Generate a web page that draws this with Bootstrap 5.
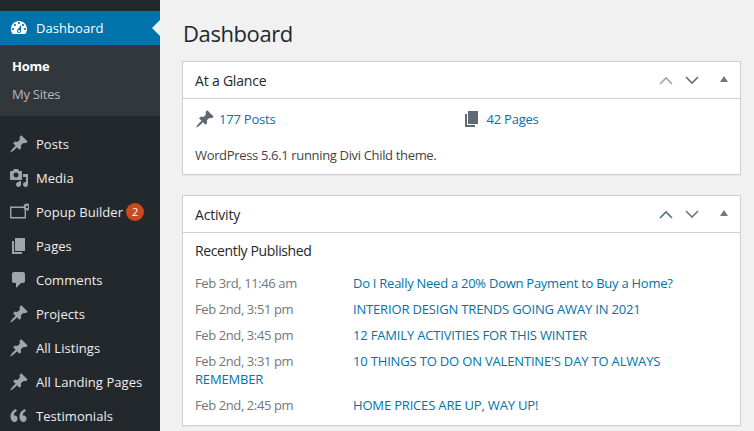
<!DOCTYPE html>
<html lang="en">
<head>
<meta charset="utf-8">
<title>Dashboard</title>
<link href="https://cdn.jsdelivr.net/npm/bootstrap@5.3.0/dist/css/bootstrap.min.css" rel="stylesheet">
<style>
html,body{height:431px;overflow:hidden}
body{background:#f1f1f1;font-family:"Open Sans","Noto Sans",sans-serif;font-size:13px;line-height:18px;color:#444}
.wp-shell{height:431px}
.wp-side{width:160px;flex:none;background:#23282d;padding-top:11px;overflow:hidden}
.wp-item{height:34px;padding-left:9px;gap:7px;color:#eee;text-decoration:none;letter-spacing:.05px;white-space:nowrap}
.wp-item svg{width:20px;height:20px;fill:#a0a5aa;flex:none}
.wp-current{background:#0073aa;color:#fff;position:relative}
.wp-current svg{fill:#fff}
.wp-current::after{content:"";position:absolute;right:0;top:9px;border:8px solid transparent;border-right-color:#f1f1f1;border-left-width:0}
.wp-sub{background:#32373c;height:71px;padding:7px 12px}
.wp-sub a{display:block;color:#b4b9be;text-decoration:none;height:28px;line-height:28px;letter-spacing:-.25px}
.wp-sub a.on{color:#fff;font-weight:700}
.wp-menu{margin-top:11px}
.wp-count{width:18px;height:18px;border-radius:50%;background:#ca4a1f;color:#fff;font-size:11px;line-height:18px;text-align:center;margin-left:-4px;letter-spacing:0}
.wp-main{padding:0 13px 0 22px;min-width:0}
.wp-title{font-size:22px;font-weight:400;line-height:29px;color:#23282d;margin:19px 0 13px 1px;letter-spacing:-.4px}
.wp-box{border:1px solid #ccd0d4;border-radius:0;background:#fff;box-shadow:0 1px 1px rgba(0,0,0,.04)}
.wp-box+.wp-box{margin-top:20px}
.wp-head{height:37px;padding:0 12px;background:#fff;border-bottom:1px solid #ccd0d4;border-radius:0!important}
.wp-head h2{font-size:14px;line-height:18px;font-weight:400;margin:2px 0 0;color:#23282d;letter-spacing:-.2px}
.wp-tools{gap:12px}
.wp-tools svg{width:14px;height:9px;fill:none;stroke-width:1.6}
.wp-tri{width:0;height:0;border:4px solid transparent;border-bottom:6px solid #72777c;border-top:0;margin-left:9px;margin-bottom:2px}
.wp-body{padding:10px 12px 0;letter-spacing:-.22px}
.wp-stat{width:269.5px;gap:4px}
.wp-stat svg{width:20px;height:20px;fill:#606a73;flex:none}
.wp-stat.second svg{margin-right:1px}
a.wp-link{color:#0073aa;text-decoration:none}
a.wp-caps{letter-spacing:-.17px}
.wp-stats{height:20px}
.wp-ver{margin:17px 0 0;letter-spacing:-.34px}
.wp-glance{height:75px}
.wp-recent{font-size:14px;color:#23282d;margin:0 0 14px;letter-spacing:-.37px}
.wp-activity{padding-top:9px;height:192px}
.wp-list{list-style:none;margin:0;padding:0;letter-spacing:-.26px}
.wp-list li{margin-bottom:8px}
.wp-date{display:inline-block;width:158px;color:#72777c;letter-spacing:-.4px}
.wp-pop{fill:none;stroke:#a0a5aa;stroke-width:1.4}
</style>
</head>
<body>
<div class="d-flex wp-shell">
  <nav class="wp-side">
    <a class="wp-item wp-current d-flex align-items-center" href="#"><svg viewBox="0 0 20 20"><path d="M3.76 16h12.48c1.1-1.37 1.76-3.11 1.76-5 0-4.42-3.58-8-8-8s-8 3.58-8 8c0 1.89.66 3.63 1.76 5zM10 4c.55 0 1 .45 1 1s-.45 1-1 1-1-.45-1-1 .45-1 1-1zM6 6c.55 0 1 .45 1 1s-.45 1-1 1-1-.45-1-1 .45-1 1-1zm8 0c.55 0 1 .45 1 1s-.45 1-1 1-1-.45-1-1 .45-1 1-1zm-5.37 5.55L12 7v6c0 1.1-.9 2-2 2s-2-.9-2-2c0-.57.24-1.08.63-1.45zM4 10c.55 0 1 .45 1 1s-.45 1-1 1-1-.45-1-1 .45-1 1-1zm12 0c.55 0 1 .45 1 1s-.45 1-1 1-1-.45-1-1 .45-1 1-1zm-5 3c0-.55-.45-1-1-1s-1 .45-1 1 .45 1 1 1 1-.45 1-1z"/></svg>Dashboard</a>
    <div class="wp-sub"><a class="on" href="#">Home</a><a href="#">My Sites</a></div>
    <div class="wp-menu">
    <a class="wp-item d-flex align-items-center" href="#"><svg viewBox="0 0 20 20"><use href="#pin"/></svg>Posts</a>
    <a class="wp-item d-flex align-items-center" href="#"><svg viewBox="0 0 20 20"><path d="M13 11V4c0-.55-.45-1-1-1h-1.67L9 1H5L3.67 3H2c-.55 0-1 .45-1 1v7c0 .55.45 1 1 1h10c.55 0 1-.45 1-1zM7 4.5c1.38 0 2.5 1.12 2.5 2.5S8.38 9.5 7 9.5 4.5 8.38 4.5 7 5.62 4.5 7 4.5zM14 6h5v10.5c0 1.38-1.12 2.5-2.5 2.5S14 17.88 14 16.5s1.12-2.5 2.5-2.5c.17 0 .34.02.5.05V9h-3V6zm-4 8.05V13h2v3.5c0 1.38-1.12 2.5-2.5 2.5S7 17.88 7 16.5 8.12 14 9.5 14c.17 0 .34.02.5.05z"/></svg>Media</a>
    <a class="wp-item d-flex align-items-center" href="#"><svg viewBox="0 0 20 20"><path class="wp-pop" d="M1.7 5.2h14.6v10.6H1.7z"/><circle cx="18" cy="5" r="3.4"/><path d="M16.7 3.7l2.6 2.6m0-2.6l-2.6 2.6" stroke="#23282d" stroke-width="1"/></svg><span>Popup Builder</span><span class="wp-count">2</span></a>
    <a class="wp-item d-flex align-items-center" href="#"><svg viewBox="0 0 20 20"><use href="#page"/></svg>Pages</a>
    <a class="wp-item d-flex align-items-center" href="#"><svg viewBox="0 0 20 20"><path d="M5 2h9c1.1 0 2 .9 2 2v7c0 1.1-.9 2-2 2h-2l-5 5v-5H5c-1.1 0-2-.9-2-2V4c0-1.1.9-2 2-2z"/></svg>Comments</a>
    <a class="wp-item d-flex align-items-center" href="#"><svg viewBox="0 0 20 20"><use href="#pin"/></svg>Projects</a>
    <a class="wp-item d-flex align-items-center" href="#"><svg viewBox="0 0 20 20"><use href="#pin"/></svg>All Listings</a>
    <a class="wp-item d-flex align-items-center" href="#"><svg viewBox="0 0 20 20"><use href="#pin"/></svg>All Landing Pages</a>
    <a class="wp-item d-flex align-items-center" href="#"><svg viewBox="0 0 20 20"><path d="M8.54 12.74c0-.87-.24-1.61-.72-2.22-.73-.92-2.14-1.03-2.96-.85-.34-1.94 1.3-4.07 3.18-4.99L6.65 3C3.45 4.6 1.22 7.41 1.53 10.94 1.7 13.62 3.26 16 5.78 16c1.52 0 2.76-1.5 2.76-3.26zm8.95 0c0-.87-.24-1.61-.72-2.22-.73-.92-2.14-1.03-2.96-.85-.34-1.94 1.3-4.07 3.18-4.99L15.6 3c-3.2 1.6-5.43 4.41-5.12 7.94.17 2.68 1.73 5.06 4.25 5.06 1.52 0 2.76-1.5 2.76-3.26z"/></svg>Testimonials</a>
    </div>
  </nav>
  <main class="wp-main flex-grow-1">
    <h1 class="wp-title">Dashboard</h1>
    <section class="card wp-box">
      <div class="card-header wp-head d-flex align-items-center justify-content-between">
        <h2>At a Glance</h2>
        <div class="wp-tools d-flex align-items-center">
          <svg viewBox="0 0 14 9"><path d="M1 8l6-6 6 6" stroke="#a0a5aa"/></svg>
          <svg viewBox="0 0 14 9"><path d="M1 1l6 6 6-6" stroke="#6c6a6a"/></svg>
          <span class="wp-tri"></span>
        </div>
      </div>
      <div class="wp-body wp-glance">
        <div class="d-flex wp-stats">
          <a class="wp-link wp-stat d-flex align-items-center" href="#"><svg viewBox="0 0 20 20"><use href="#pin"/></svg>177 Posts</a>
          <a class="wp-link wp-stat second d-flex align-items-center" href="#"><svg viewBox="0 0 20 20"><use href="#page"/></svg>42 Pages</a>
        </div>
        <p class="wp-ver">WordPress 5.6.1 running Divi Child theme.</p>
      </div>
    </section>
    <section class="card wp-box">
      <div class="card-header wp-head d-flex align-items-center justify-content-between">
        <h2>Activity</h2>
        <div class="wp-tools d-flex align-items-center">
          <svg viewBox="0 0 14 9"><path d="M1 8l6-6 6 6" stroke="#4f7186"/></svg>
          <svg viewBox="0 0 14 9"><path d="M1 1l6 6 6-6" stroke="#80766f"/></svg>
          <span class="wp-tri"></span>
        </div>
      </div>
      <div class="wp-body wp-activity">
        <p class="wp-recent">Recently Published</p>
        <ul class="wp-list">
          <li><span class="wp-date">Feb 3rd, 11:46 am</span><a class="wp-link" href="#">Do I Really Need a 20% Down Payment to Buy a Home?</a></li>
          <li><span class="wp-date">Feb 2nd, 3:51 pm</span><a class="wp-link wp-caps" href="#">INTERIOR DESIGN TRENDS GOING AWAY IN 2021</a></li>
          <li><span class="wp-date">Feb 2nd, 3:45 pm</span><a class="wp-link wp-caps" href="#">12 FAMILY ACTIVITIES FOR THIS WINTER</a></li>
          <li><span class="wp-date">Feb 2nd, 3:31 pm</span><a class="wp-link wp-caps" href="#">10 THINGS TO DO ON VALENTINE'S DAY TO ALWAYS REMEMBER</a></li>
          <li><span class="wp-date">Feb 2nd, 2:45 pm</span><a class="wp-link wp-caps" href="#">HOME PRICES ARE UP, WAY UP!</a></li>
        </ul>
      </div>
    </section>
  </main>
</div>
<svg width="0" height="0" class="d-block" aria-hidden="true"><defs>
<path id="pin" d="M10.44 3.02l1.82-1.82 6.36 6.35-1.83 1.82c-1.05-.68-2.48-.57-3.41.36l-.75.75c-.92.93-1.04 2.35-.35 3.41l-1.83 1.82-2.41-2.41-2.8 2.79c-.42.42-3.38 2.71-3.8 2.29s1.86-3.39 2.28-3.81l2.79-2.79L4.1 9.36l1.83-1.82c1.05.69 2.48.57 3.4-.36l.75-.75c.93-.92 1.05-2.35.36-3.41z"/>
<path id="page" d="M6 15V2h10v13H6zm-1 1h8v2H3V5h2v11z"/>
</defs></svg>
<script src="https://cdn.jsdelivr.net/npm/bootstrap@5.3.0/dist/js/bootstrap.bundle.min.js"></script>
</body>
</html>
